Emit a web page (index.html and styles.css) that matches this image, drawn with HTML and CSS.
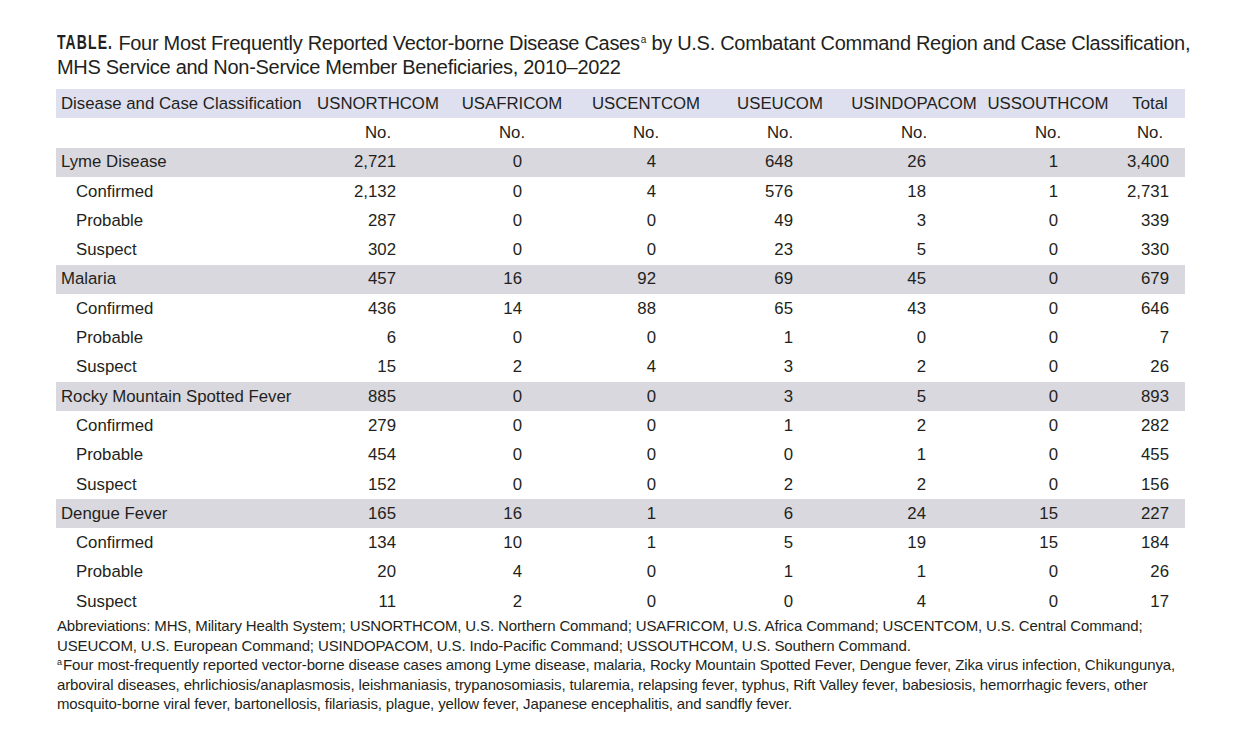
FILE: index.html
```html
<!DOCTYPE html>
<html>
<head>
    <meta charset="UTF-8">
    <title>Vector-borne Disease Cases Table</title>
    <link rel="stylesheet" href="styles.css">
</head>
<body>
    <div class="page">
        <h1 class="title"><span class="label">TABLE.</span> Four Most Frequently Reported Vector-borne Disease Cases<sup>a</sup> by U.S. Combatant Command Region and Case Classification, MHS Service and Non-Service Member Beneficiaries, 2010–2022</h1>

        <table class="data">
            <thead>
                <tr class="head">
                    <th>Disease and Case Classification</th>
                    <th>USNORTHCOM</th>
                    <th>USAFRICOM</th>
                    <th>USCENTCOM</th>
                    <th>USEUCOM</th>
                    <th>USINDOPACOM</th>
                    <th>USSOUTHCOM</th>
                    <th>Total</th>
                </tr>
                <tr class="units">
                    <th></th>
                    <th>No.</th><th>No.</th><th>No.</th><th>No.</th><th>No.</th><th>No.</th><th>No.</th>
                </tr>
            </thead>
            <tbody>
                <tr class="group"><td>Lyme Disease</td><td>2,721</td><td>0</td><td>4</td><td>648</td><td>26</td><td>1</td><td>3,400</td></tr>
                <tr class="sub"><td>Confirmed</td><td>2,132</td><td>0</td><td>4</td><td>576</td><td>18</td><td>1</td><td>2,731</td></tr>
                <tr class="sub"><td>Probable</td><td>287</td><td>0</td><td>0</td><td>49</td><td>3</td><td>0</td><td>339</td></tr>
                <tr class="sub"><td>Suspect</td><td>302</td><td>0</td><td>0</td><td>23</td><td>5</td><td>0</td><td>330</td></tr>

                <tr class="group"><td>Malaria</td><td>457</td><td>16</td><td>92</td><td>69</td><td>45</td><td>0</td><td>679</td></tr>
                <tr class="sub"><td>Confirmed</td><td>436</td><td>14</td><td>88</td><td>65</td><td>43</td><td>0</td><td>646</td></tr>
                <tr class="sub"><td>Probable</td><td>6</td><td>0</td><td>0</td><td>1</td><td>0</td><td>0</td><td>7</td></tr>
                <tr class="sub"><td>Suspect</td><td>15</td><td>2</td><td>4</td><td>3</td><td>2</td><td>0</td><td>26</td></tr>

                <tr class="group"><td>Rocky Mountain Spotted Fever</td><td>885</td><td>0</td><td>0</td><td>3</td><td>5</td><td>0</td><td>893</td></tr>
                <tr class="sub"><td>Confirmed</td><td>279</td><td>0</td><td>0</td><td>1</td><td>2</td><td>0</td><td>282</td></tr>
                <tr class="sub"><td>Probable</td><td>454</td><td>0</td><td>0</td><td>0</td><td>1</td><td>0</td><td>455</td></tr>
                <tr class="sub"><td>Suspect</td><td>152</td><td>0</td><td>0</td><td>2</td><td>2</td><td>0</td><td>156</td></tr>

                <tr class="group"><td>Dengue Fever</td><td>165</td><td>16</td><td>1</td><td>6</td><td>24</td><td>15</td><td>227</td></tr>
                <tr class="sub"><td>Confirmed</td><td>134</td><td>10</td><td>1</td><td>5</td><td>19</td><td>15</td><td>184</td></tr>
                <tr class="sub"><td>Probable</td><td>20</td><td>4</td><td>0</td><td>1</td><td>1</td><td>0</td><td>26</td></tr>
                <tr class="sub"><td>Suspect</td><td>11</td><td>2</td><td>0</td><td>0</td><td>4</td><td>0</td><td>17</td></tr>
            </tbody>
        </table>

        <div class="notes">
            <p>Abbreviations: MHS, Military Health System; USNORTHCOM, U.S. Northern Command; USAFRICOM, U.S. Africa Command; USCENTCOM, U.S. Central Command; USEUCOM, U.S. European Command; USINDOPACOM, U.S. Indo-Pacific Command; USSOUTHCOM, U.S. Southern Command.</p>
            <p><sup>a</sup>Four most-frequently reported vector-borne disease cases among Lyme disease, malaria, Rocky Mountain Spotted Fever, Dengue fever, Zika virus infection, Chikungunya, arboviral diseases, ehrlichiosis/anaplasmosis, leishmaniasis, trypanosomiasis, tularemia, relapsing fever, typhus, Rift Valley fever, babesiosis, hemorrhagic fevers, other mosquito-borne viral fever, bartonellosis, filariasis, plague, yellow fever, Japanese encephalitis, and sandfly fever.</p>
        </div>
    </div>
</body>
</html>
```

FILE: styles.css
```css
body {
    margin: 0;
    background-color: #ffffff;
    color: #231f20;
    font-family: "Liberation Sans", Arial, sans-serif;
}

.page {
    width: 1140px;
    padding: 31px 0 0 57px;
}

.title {
    margin: 0 0 10px 0;
    font-weight: normal;
    font-size: 20px;
    line-height: 24px;
    letter-spacing: -0.3px;
}

/* condensed bold label: small face stretched to the cap height of the title */
.title .label {
    display: inline-block;
    font-size: 14px;
    line-height: 14px;
    font-weight: bold;
    letter-spacing: 1.1px;
    transform: scaleY(1.4);
    transform-origin: center bottom;
}

.title sup,
.notes sup {
    position: relative;
    vertical-align: baseline;
    line-height: 1;
    letter-spacing: 0;
}

.title sup {
    font-size: 10px;
    top: -7px;
    margin-left: 1px;
}

.data {
    width: 1129px;
    margin-left: -1px;
    border-collapse: collapse;
    table-layout: fixed;
    font-size: 16.8px;
}

.data th,
.data td {
    height: 29.3px;
    padding: 0;
    font-weight: normal;
    white-space: nowrap;
}

.data th:nth-child(1),
.data td:nth-child(1) { width: 255px; text-align: left; padding-left: 5px; box-sizing: border-box; }
.data th:nth-child(n+2),
.data td:nth-child(n+2) { width: 134px; }
.data th:nth-child(8),
.data td:nth-child(8) { width: 70px; }

.data th { text-align: center; }

.head { background-color: #dfe0ef; }
.group { background-color: #d9d8de; }

.data td { text-align: right; }
.data td:nth-child(2) { padding-right: 49px; }
.data td:nth-child(3) { padding-right: 57px; }
.data td:nth-child(4) { padding-right: 57px; }
.data td:nth-child(5) { padding-right: 54px; }
.data td:nth-child(6) { padding-right: 55px; }
.data td:nth-child(7) { padding-right: 57px; }
.data td:nth-child(8) { padding-right: 16px; }

.sub td:first-child { padding-left: 20px; }

.notes {
    font-size: 15px;
    line-height: 19.5px;
    letter-spacing: -0.13px;
}

.notes p { margin: 0; }

.notes sup {
    font-size: 9px;
    top: -5px;
    margin-right: 1px;
}
```
